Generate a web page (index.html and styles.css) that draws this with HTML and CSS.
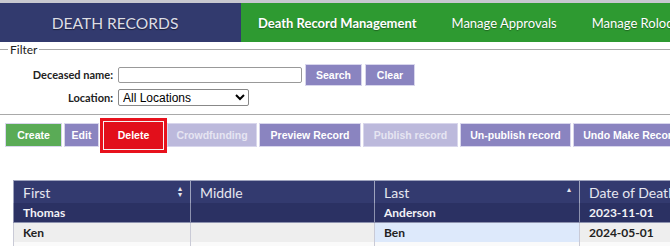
FILE: index.html
```html
<!DOCTYPE html>
<html lang="en">
<head>
  <meta charset="UTF-8">
  <title>Death Records</title>
  <link rel="stylesheet" href="styles.css">
</head>
<body>
  <div class="topbar">
    <div class="brand">DEATH RECORDS</div>
    <nav class="menu">
      <a href="#" class="active">Death Record Management</a>
      <a href="#">Manage Approvals</a>
      <a href="#">Manage Rolodex</a>
    </nav>
  </div>

  <fieldset class="filter">
    <legend>Filter</legend>
    <div class="filter-row">
      <label for="name">Deceased name:</label>
      <input type="text" id="name">
      <button class="btn search">Search</button>
      <button class="btn clear">Clear</button>
    </div>
    <div class="filter-row">
      <label for="loc">Location:</label>
      <select id="loc">
        <option>All Locations</option>
      </select>
    </div>
  </fieldset>

  <div class="toolbar">
    <button class="btn create">Create</button>
    <button class="btn edit">Edit</button>
    <span class="highlight"><button class="btn delete">Delete</button></span>
    <button class="btn disabled crowd">Crowdfunding</button>
    <button class="btn preview">Preview Record</button>
    <button class="btn disabled publish">Publish record</button>
    <button class="btn unpublish">Un-publish record</button>
    <button class="btn undo">Undo Make Record Public</button>
  </div>

  <table class="grid">
    <thead>
      <tr>
        <th class="c-first">First <span class="sort">&#x25B4;<br>&#x25BE;</span></th>
        <th class="c-middle">Middle</th>
        <th class="c-last">Last <span class="sort up">&#x25B4;</span></th>
        <th class="c-date">Date of Death</th>
      </tr>
    </thead>
    <tbody>
      <tr class="selected">
        <td>Thomas</td><td></td><td>Anderson</td><td>2023-11-01</td>
      </tr>
      <tr>
        <td>Ken</td><td></td><td class="hl">Ben</td><td>2024-05-01</td>
      </tr>
      <tr>
        <td></td><td></td><td></td><td></td>
      </tr>
    </tbody>
  </table>
</body>
</html>
```

FILE: styles.css
```css
body {
  margin: 0;
  font-family: 'Lato', sans-serif;
  color: #222;
  overflow: hidden;
  background: #fff;
}

/* top navigation */
.topbar {
  display: flex;
  height: 39px;
  border-top: 3px solid #c8c8d0;
  width: 900px;
}
.brand {
  width: 241px;
  box-sizing: border-box;
  padding-right: 11px;
  background: #323a6e;
  color: #dcdde6;
  font-size: 15.6px;
  display: flex;
  align-items: center;
  justify-content: center;
  text-shadow: 0 1px 1px rgba(0, 0, 0, 0.5);
}
.menu {
  flex: 1;
  background: #2e9a31;
  display: flex;
  align-items: center;
  padding-left: 17px;
}
.menu a {
  color: #fff;
  text-decoration: none;
  font-size: 13px;
  margin-right: 35px;
  text-shadow: 0 1px 1px rgba(0, 0, 0, 0.35);
}
.menu a.active {
  font-weight: bold;
}

/* filter */
.filter {
  margin: 0;
  padding: 6px 0 5px;
  border: 0;
  border-top: 1px solid #a9a9a9;
  border-bottom: 1px solid #a9a9a9;
}
.filter legend {
  font-size: 12px;
  padding: 0 2px;
  margin-left: 8px;
}
.filter-row {
  display: flex;
  align-items: center;
  height: 23px;
}
.filter-row label {
  width: 113px;
  text-align: right;
  font-weight: bold;
  font-size: 11px;
  padding-right: 5px;
}
.filter-row input {
  width: 180px;
  height: 12px;
  padding: 1px;
  border: 1px solid #999;
  border-radius: 2px;
  font-size: 12px;
  margin: 0 3px 0 0;
}
.filter-row select {
  width: 131px;
  height: 17px;
  font-family: 'Liberation Sans', sans-serif;
  font-size: 12px;
  border: 1px solid #888;
  border-radius: 2px;
  padding: 0;
  background: #fff;
  margin: 0;
}

/* buttons */
.btn {
  font-family: 'Liberation Sans', Arial, sans-serif;
  font-size: 10.5px;
  font-weight: bold;
  color: #fff;
  background: #8a84c0;
  border: 1px solid #d8d6ec;
  height: 24px;
  padding: 0;
  margin: 0 2px 0 0;
  cursor: pointer;
}
.filter-row .btn {
  height: 22px;
  margin-right: 3px;
}
.btn.search { width: 57px; }
.btn.clear { width: 50px; }

.toolbar {
  display: flex;
  align-items: center;
  padding: 0 0 0 5px;
  height: 40px;
  box-sizing: border-box;
  width: 900px;
}
.btn.create {
  background: #5aab56;
  width: 57px;
}
.btn.edit { width: 35px; }
.btn.crowd { width: 90px; }
.btn.preview { width: 102px; }
.btn.publish { width: 95px; }
.btn.unpublish { width: 111px; }
.btn.undo { width: 150px; }
.btn.disabled {
  background: #bcb9dc;
  color: #e6e5f2;
}
.highlight {
  border: 3px solid #e8111c;
  display: inline-flex;
  margin-right: 0;
  margin-left: -1px;
}
.toolbar .btn.delete {
  background: #e20f1b;
  border: 1px solid #f4f4f4;
  height: 29px;
  width: 61px;
  margin: 0;
}

/* table */
.grid {
  margin: 25px 0 0 13px;
  border-collapse: collapse;
  width: 800px;
  table-layout: fixed;
  font-size: 12px;
}
.grid th {
  background: #333a6f;
  color: #e6e7ef;
  font-weight: normal;
  font-size: 14px;
  text-align: left;
  height: 22px;
  padding: 0 9px;
  border: 1px solid #9ea3bd;
  border-bottom: 0;
  position: relative;
}
.grid .c-first { width: 158px; }
.grid .c-middle { width: 165px; }
.grid .c-last { width: 186px; }
.sort {
  position: absolute;
  right: 8px;
  top: 4px;
  font-size: 8px;
  line-height: 6px;
  color: #e6e7ef;
}
.sort.up {
  top: 5px;
}
.grid td {
  height: 19px;
  padding: 0 9px;
  font-weight: bold;
  border-left: 1px solid #c9cad6;
  border-right: 1px solid #c9cad6;
}
.grid tr.selected td {
  background: #2b3163;
  color: #f2f2f6;
  border-color: #8c91ae;
}
.grid tbody tr:nth-child(2) td {
  background: #eeeeee;
  border-top: 1px solid #8c91ae;
}
.grid tbody tr:nth-child(2) td.hl {
  background: #dde9fb;
}
.grid tbody tr:nth-child(3) td {
  background: #fafafa;
}
```
